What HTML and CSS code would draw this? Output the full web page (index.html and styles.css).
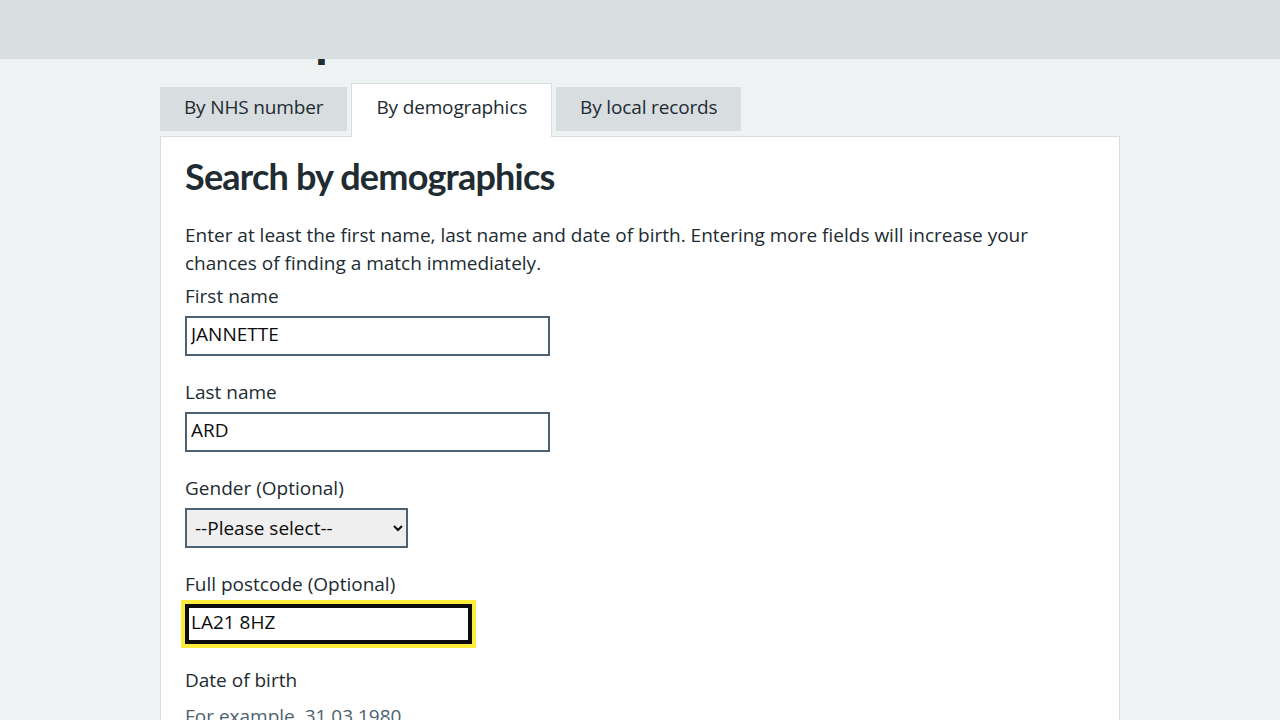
FILE: index.html
```html
<!DOCTYPE html>
<html lang="en">
<head>
<meta charset="utf-8">
<title>Find a patient</title>
<link rel="stylesheet" href="styles.css">
</head>
<body>
<header class="site-header"></header>
<main class="page">
  <h1 class="page-title">Find a patient</h1>
  <ul class="tabs">
    <li class="tab">By NHS number</li>
    <li class="tab tab-active">By demographics</li>
    <li class="tab">By local records</li>
  </ul>
  <section class="card">
    <h2 class="card-title">Search by demographics</h2>
    <p class="intro">Enter at least the first name, last name and date of birth. Entering more fields will increase your chances of finding a match immediately.</p>
    <div class="field">
      <label class="label" for="fn">First name</label>
      <input class="input input-name" id="fn" type="text" value="JANNETTE">
    </div>
    <div class="field">
      <label class="label" for="ln">Last name</label>
      <input class="input input-name" id="ln" type="text" value="ARD">
    </div>
    <div class="field">
      <label class="label" for="gender">Gender (Optional)</label>
      <select class="select" id="gender">
        <option>--Please select--</option>
        <option>Female</option>
        <option>Male</option>
      </select>
    </div>
    <div class="field">
      <label class="label" for="pc">Full postcode (Optional)</label>
      <input class="input input-postcode is-focused" id="pc" type="text" value="LA21 8HZ">
    </div>
    <div class="field">
      <label class="label">Date of birth</label>
      <div class="hint">For example, 31 03 1980</div>
    </div>
  </section>
</main>
</body>
</html>
```
FILE: styles.css
```css
html, body {
  margin: 0;
  padding: 0;
}
body {
  background: #eef2f3;
  color: #212b32;
  font-family: "Open Sans", "Liberation Sans", Arial, sans-serif;
  font-size: 19px;
  line-height: 28px;
  height: 720px;
  overflow: hidden;
}
.site-header {
  position: fixed;
  top: 0;
  left: 0;
  right: 0;
  height: 59px;
  background: #d8dde0;
  z-index: 10;
}
.page {
  width: 960px;
  margin: 0 auto;
  padding-top: 11px;
}
.page-title {
  margin: 0 0 16px;
  font-family: "Liberation Sans", Arial, sans-serif;
  font-size: 48px;
  line-height: 56px;
  font-weight: 700;
}
.tabs {
  list-style: none;
  margin: 0;
  padding: 0;
  display: flex;
  align-items: flex-end;
  gap: 4px;
  position: relative;
  z-index: 2;
}
.tab {
  background: #d8dde0;
  padding: 6px 24px 10px;
  margin-bottom: 5px;
  line-height: 28px;
  letter-spacing: -0.15px;
}
.tab-active {
  background: #fff;
  border: 1px solid #d8dde0;
  border-bottom: 0;
  padding: 9px 24px 16px;
  margin-bottom: -1px;
}
.card {
  background: #fff;
  border: 1px solid #d8dde0;
  padding: 18px 24px 24px;
  position: relative;
  z-index: 1;
}
.card-title {
  margin: 0 0 24px;
  font-family: "Lato", "Liberation Sans", Arial, sans-serif;
  font-size: 36px;
  line-height: 42px;
  font-weight: 700;
  letter-spacing: -0.8px;
}
.intro {
  margin: 0 0 5px;
}
.field {
  margin-bottom: 22px;
}
.label {
  display: block;
  margin-bottom: 6px;
}
.input {
  display: block;
  box-sizing: border-box;
  height: 40px;
  border: 2px solid #4c6272;
  padding: 1px 4px 5px;
  font: inherit;
  line-height: 28px;
  color: #0b0c0c;
  background: #fff;
  margin: 0;
}
.input-name {
  width: 365px;
}
.input-postcode {
  width: 287px;
}
.is-focused {
  border-color: #0b0c0c;
  box-shadow: inset 0 0 0 2px #0b0c0c;
  outline: 4px solid #ffeb3b;
  outline-offset: 0;
}
.select {
  display: block;
  box-sizing: border-box;
  height: 40px;
  width: 223px;
  border: 2px solid #4c6272;
  border-radius: 0;
  background-color: #efefef;
  padding: 4px;
  font: inherit;
  color: #0b0c0c;
  margin: 0;
}
.hint {
  color: #4c6272;
  margin-top: 8px;
}
```
